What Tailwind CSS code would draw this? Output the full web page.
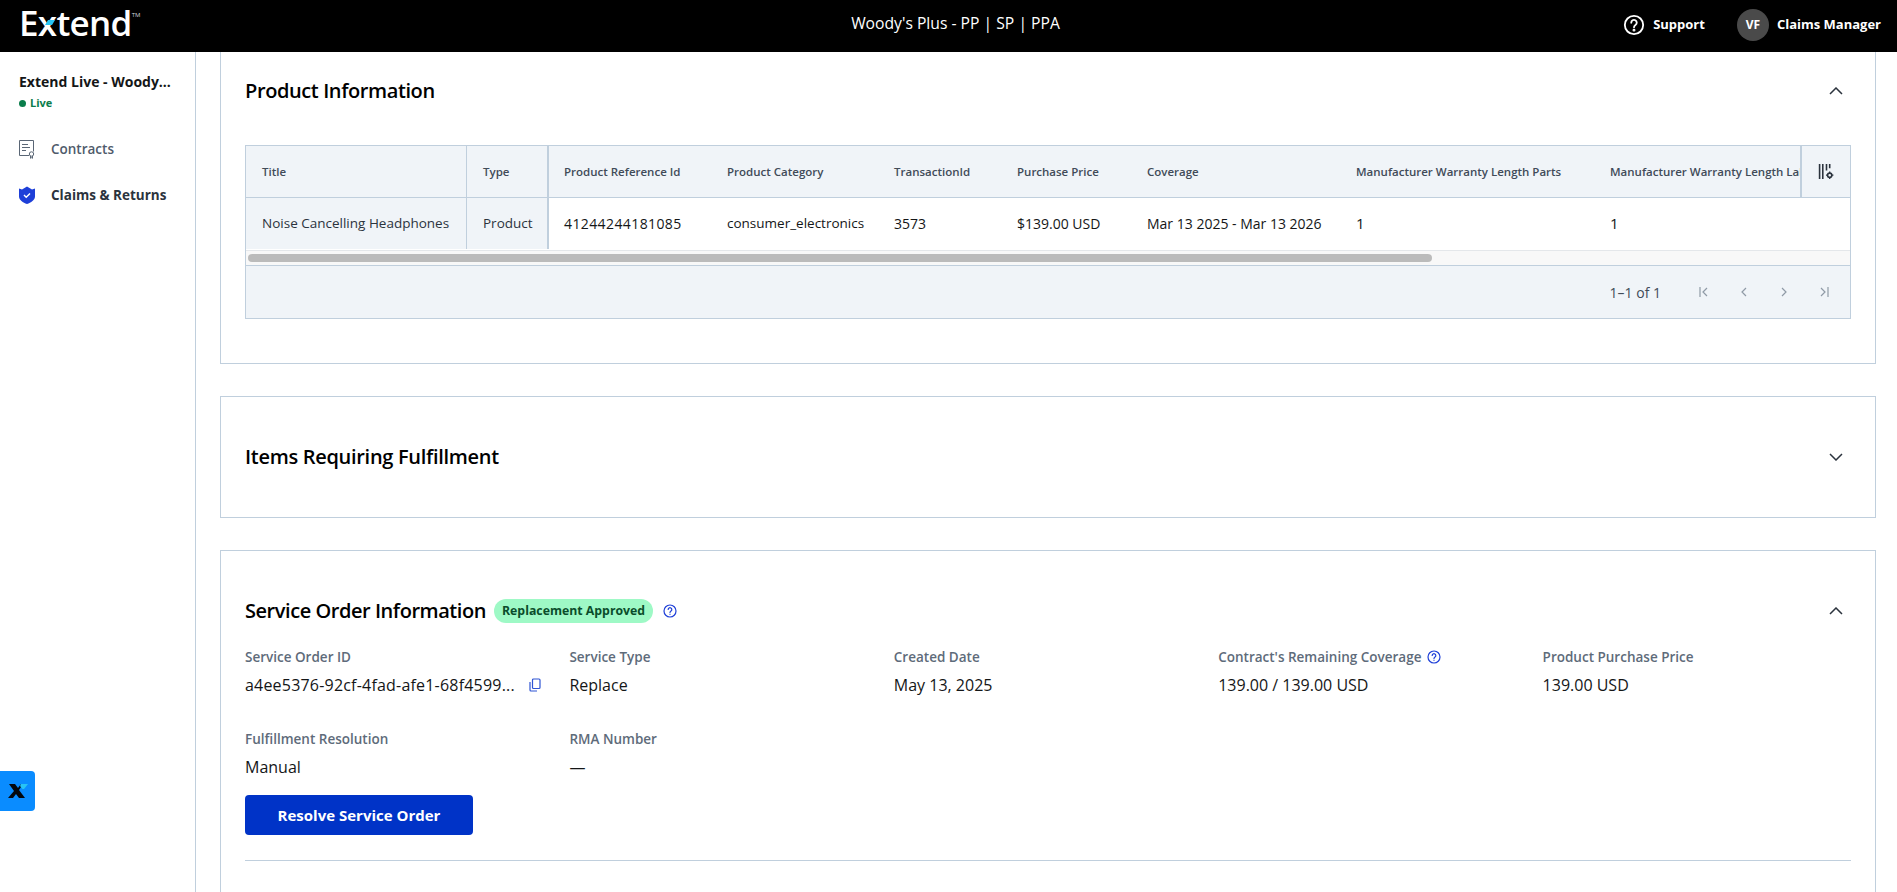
<!DOCTYPE html>
<html lang="en">
<head>
  <meta charset="UTF-8">
  <title>Service Order</title>
  <script src="https://cdn.jsdelivr.net/npm/@tailwindcss/browser@4"></script>
</head>
<body class="h-screen overflow-hidden flex flex-col bg-white text-[#141617] font-['Open_Sans',sans-serif]">

  <!-- Top bar -->
  <header class="h-[52px] shrink-0 bg-black text-white flex items-center relative">
    <div class="absolute left-[19px] top-[3px] flex items-start">
      <span class="text-[35px] leading-[40px] font-semibold tracking-[-0.7px]">Extend</span>
      <span class="text-[6px] leading-[6px] mt-[9px] text-gray-300">TM</span>
      <svg class="absolute left-[26px] top-[17px] w-[10px] h-[5px]" viewBox="0 0 10 5"><path d="M3 0h7L7 5H0z" fill="#27c4f5"/></svg>
    </div>
    <div class="flex-1 text-center text-[15.700px] font-medium pl-[14px] pb-[4px]">Woody's Plus - PP | SP | PPA</div>
    <div class="absolute right-[16px] top-0 h-[52px] pb-[3px] flex items-center">
      <svg class="w-[22px] h-[22px] mr-[8px]" viewBox="0 0 24 24" fill="none" stroke="white" stroke-width="2"><circle cx="12" cy="12" r="10"/><path d="M9 9.500a3 3 0 1 1 4.600 2.500c-1 .7-1.600 1.300-1.600 2.500" stroke-linecap="round"/><circle cx="12" cy="17.600" r="0.6" fill="white"/></svg>
      <span class="text-[13px] font-bold mr-[32px]">Support</span>
      <div class="w-[32px] h-[32px] rounded-full bg-[#4a4a4a] flex items-center justify-center text-[12px] font-bold mr-[8px]">VF</div>
      <span class="text-[13px] font-bold">Claims Manager</span>
    </div>
  </header>

  <div class="flex-1 flex min-h-0">
    <!-- Sidebar -->
    <aside class="w-[196px] shrink-0 border-r border-[#c0cfdd] pl-[19px] pt-[21px] relative">
      <div class="text-[14px] leading-[18px] font-bold whitespace-nowrap">Extend Live - Woody...</div>
      <div class="flex items-center gap-[4px] text-[11px] leading-[16px] font-bold text-[#0a7d4b] mt-[4px]">
        <span class="w-[7px] h-[7px] rounded-full bg-[#0a7d4b]"></span>Live
      </div>
      <nav class="mt-[28px] text-[13.500px] font-semibold">
        <div class="h-[20px] flex items-center gap-[16px] text-[#4f5b6b]">
          <svg class="w-[16px] h-[19px]" viewBox="0 0 16 19" fill="none" stroke="#5a6675" stroke-width="1"><path d="M10 15.500H.5V.5h14v11"/><path d="M3 4.500h6M3 7.500h8M3 10.500h4"/><circle cx="12.500" cy="14" r="2.200"/><path d="M11.500 16v2.300l1-.6 1 .6V16"/></svg>
          Contracts
        </div>
        <div class="h-[20px] mt-[26px] flex items-center gap-[16px] text-[#2b333d] font-bold">
          <svg class="w-[16px] h-[18px]" viewBox="0 0 16 18"><path d="M0 2.500 3 3.400 8 .5l5 2.900 3-.9v8c0 3.500-4 6-8 7.500-4-1.500-8-4-8-7.500z" fill="#1e3fd8"/><path d="M5 9l2.200 2.200L11 7.500" fill="none" stroke="white" stroke-width="1.400"/></svg>
          Claims &amp; Returns
        </div>
      </nav>
      <!-- Floating launcher -->
      <div class="absolute left-0 top-[719px] w-[35px] h-[40px] rounded-r-[4px] bg-[#0a8cff] flex items-center justify-center">
        <svg class="w-[20px] h-[14px]" viewBox="0 0 20 14"><path d="M1 0h6l3 4 3-4h2L11 6l6 8h-6L8 10l-3 4H0l6-7z" fill="#04070d"/><path d="M13 0h7l-4 5h-1.500L12 2z" fill="#27c4f5"/></svg>
      </div>
    </aside>

    <!-- Main column, scrolled so that the first card's top is out of view -->
    <main class="flex-1 min-w-0 overflow-hidden pl-[24px] pr-[21px]">
      <section class="border border-[#c0cfdd] border-t-0 h-[312px] px-[24px] relative">
        <div class="h-[93px] pb-[16px] flex items-center justify-between">
          <h2 class="text-[20px] font-semibold tracking-[-0.4px] text-black">Product Information</h2>
          <svg class="w-[14px] h-[8px] mr-[8px]" viewBox="0 0 14 8" fill="none" stroke="#2b333d" stroke-width="1.500"><path d="M1 7l6-6 6 6"/></svg>
        </div>

        <!-- Product table -->
        <div class="border border-[#c0cfdd] h-[174px] text-[14px]">
          <div class="h-[52px] grid grid-cols-[221px_82px_162px_167px_123px_130px_209px_254px_206px_50px] items-stretch bg-[#f0f4f8] border-b border-[#c0cfdd] text-[11.500px] font-semibold text-[#414b58]">
            <div class="pl-[16px] flex items-center border-r border-[#c0cfdd]">Title</div>
            <div class="pl-[16px] flex items-center border-r-2 border-[#c0cfdd]">Type</div>
            <div class="pl-[15px] flex items-center">Product Reference Id</div>
            <div class="pl-[16px] flex items-center">Product Category</div>
            <div class="pl-[16px] flex items-center">TransactionId</div>
            <div class="pl-[16px] flex items-center">Purchase Price</div>
            <div class="pl-[16px] flex items-center">Coverage</div>
            <div class="pl-[16px] flex items-center whitespace-nowrap">Manufacturer Warranty Length Parts</div>
            <div class="pl-[16px] flex items-center whitespace-nowrap overflow-hidden">Manufacturer Warranty Length Labor</div>
            <div class="flex items-center justify-center border-l-2 border-[#c0cfdd]">
              <svg class="w-[17px] h-[17px]" viewBox="0 0 16 16" fill="none" stroke="#2b333d" stroke-width="1.500"><path d="M1.500 1v14M4.500 1v14M8 1v6M11 1v4"/><circle cx="11" cy="11.500" r="2"/><path d="M11 8v1.500M11 13.500V15M7.500 11.500H9M13 11.500h1.500" stroke-width="1.200"/></svg>
            </div>
          </div>
          <div class="h-[53px] pb-[1px] grid grid-cols-[221px_82px_162px_167px_123px_130px_209px_254px_206px_50px] items-stretch border-b border-[#e4e7ea] text-[13.500px]">
            <div class="pl-[16px] flex items-center bg-[#f0f4f8] border-r border-[#c0cfdd] whitespace-nowrap text-[#2b333d]">Noise Cancelling Headphones</div>
            <div class="pl-[16px] flex items-center bg-[#f0f4f8] border-r-2 border-[#c0cfdd] text-[#2b333d]">Product</div>
            <div class="pl-[15px] flex items-center text-[14px] tracking-[0.4px]">41244244181085</div>
            <div class="pl-[16px] flex items-center">consumer_electronics</div>
            <div class="pl-[16px] flex items-center text-[14px]">3573</div>
            <div class="pl-[16px] flex items-center whitespace-nowrap text-[14px]">$139.00 USD</div>
            <div class="pl-[16px] flex items-center whitespace-nowrap text-[14px]">Mar 13 2025 - Mar 13 2026</div>
            <div class="pl-[16px] flex items-center text-[15px]">1</div>
            <div class="pl-[16px] flex items-center text-[15px]">1</div>
            <div></div>
          </div>
          <!-- Horizontal scrollbar -->
          <div class="h-[15px] bg-[#f8f8f8] border-b border-[#c0cfdd] pl-[2px] pt-[3px]">
            <div class="w-[1184px] h-[8px] rounded-full bg-[#bbbbbb]"></div>
          </div>
          <div class="h-[52px] bg-[#f0f4f8] flex items-center justify-end pr-[21px] text-[14px] text-[#414b58]">
            <span class="mr-[38px]">1–1 of 1</span>
            <div class="flex gap-[30px]">
              <svg class="w-[10px] h-[10px]" viewBox="0 0 10 10" fill="none" stroke="#8f9aa6" stroke-width="1.200"><path d="M1 0v10M8 1 4 5l4 4"/></svg>
              <svg class="w-[10px] h-[10px]" viewBox="0 0 10 10" fill="none" stroke="#8f9aa6" stroke-width="1.200"><path d="M7 1 3 5l4 4"/></svg>
              <svg class="w-[10px] h-[10px]" viewBox="0 0 10 10" fill="none" stroke="#8f9aa6" stroke-width="1.200"><path d="M3 1l4 4-4 4"/></svg>
              <svg class="w-[10px] h-[10px]" viewBox="0 0 10 10" fill="none" stroke="#8f9aa6" stroke-width="1.200"><path d="M9 0v10M2 1l4 4-4 4"/></svg>
            </div>
          </div>
        </div>
      </section>

      <section class="mt-[32px] border border-[#c0cfdd] h-[122px] px-[24px] flex items-center justify-between">
        <h2 class="text-[20px] font-semibold tracking-[-0.3px] text-black">Items Requiring Fulfillment</h2>
        <svg class="w-[14px] h-[8px] mr-[8px]" viewBox="0 0 14 8" fill="none" stroke="#2b333d" stroke-width="1.500"><path d="M1 1l6 6 6-6"/></svg>
      </section>

      <section class="mt-[32px] border border-[#c0cfdd] h-[400px] px-[24px] pt-[48px]">
        <div class="h-[24px] flex items-center">
          <h2 class="text-[20px] font-semibold tracking-[-0.45px] mr-[8px] text-black">Service Order Information</h2>
          <span class="h-[24px] px-[8px] rounded-full bg-[#9ef9c6] text-[#0a4d2b] text-[12.300px] font-bold flex items-center mr-[10px]">Replacement Approved</span>
          <svg class="w-[14px] h-[14px]" viewBox="0 0 14 14" fill="none" stroke="#1e3fd8" stroke-width="1.200"><circle cx="7" cy="7" r="6"/><path d="M5.200 5.500a1.800 1.800 0 1 1 2.800 1.500c-.6.400-1 .7-1 1.400" stroke-linecap="round"/><path d="M7 9.800v1"/></svg>
          <svg class="w-[14px] h-[8px] ml-auto mr-[8px]" viewBox="0 0 14 8" fill="none" stroke="#2b333d" stroke-width="1.500"><path d="M1 7l6-6 6 6"/></svg>
        </div>

        <div class="grid grid-cols-5 gap-x-4 mt-[24px]">
          <div class="h-[82px]">
            <div class="text-[13.500px] leading-[20px] font-semibold text-[#5e6b7a]">Service Order ID</div>
            <div class="flex items-center text-[16px] tracking-[0.2px] leading-[24px] mt-[6px] whitespace-nowrap">
              a4ee5376-92cf-4fad-afe1-68f4599...
              <svg class="w-[12px] h-[14px] ml-[14px]" viewBox="0 0 12 14" fill="none" stroke="#2f55d4" stroke-width="1.200"><rect x="3.500" y="1" width="7.500" height="9.500" rx="1"/><path d="M1 4v8a1 1 0 0 0 1 1h6"/></svg>
            </div>
          </div>
          <div>
            <div class="text-[13.500px] leading-[20px] font-semibold text-[#5e6b7a]">Service Type</div>
            <div class="text-[16px] leading-[24px] mt-[6px]">Replace</div>
          </div>
          <div>
            <div class="text-[13.500px] leading-[20px] font-semibold text-[#5e6b7a]">Created Date</div>
            <div class="text-[16px] leading-[24px] mt-[6px]">May 13, 2025</div>
          </div>
          <div>
            <div class="flex items-center gap-[6px] text-[13.500px] leading-[20px] font-semibold text-[#5e6b7a]">
              Contract's Remaining Coverage
              <svg class="w-[14px] h-[14px]" viewBox="0 0 14 14" fill="none" stroke="#1e3fd8" stroke-width="1.200"><circle cx="7" cy="7" r="6"/><path d="M5.200 5.500a1.800 1.800 0 1 1 2.800 1.500c-.6.400-1 .7-1 1.400" stroke-linecap="round"/><path d="M7 9.800v1"/></svg>
            </div>
            <div class="text-[16px] leading-[24px] mt-[6px]">139.00 / 139.00 USD</div>
          </div>
          <div>
            <div class="text-[13.500px] leading-[20px] font-semibold text-[#5e6b7a]">Product Purchase Price</div>
            <div class="text-[16px] leading-[24px] mt-[6px]">139.00 USD</div>
          </div>
          <div>
            <div class="text-[13.500px] leading-[20px] font-semibold text-[#5e6b7a]">Fulfillment Resolution</div>
            <div class="text-[16px] leading-[24px] mt-[6px]">Manual</div>
          </div>
          <div>
            <div class="text-[13.500px] leading-[20px] font-semibold text-[#5e6b7a]">RMA Number</div>
            <div class="text-[16px] leading-[24px] mt-[6px]">—</div>
          </div>
        </div>

        <button class="mt-[16px] w-[228px] h-[40px] rounded-[4px] bg-[#0033c7] text-white text-[15px] font-bold">Resolve Service Order</button>
        <div class="mt-[25px] border-t border-[#c0cfdd]"></div>
      </section>
    </main>
  </div>
</body>
</html>
